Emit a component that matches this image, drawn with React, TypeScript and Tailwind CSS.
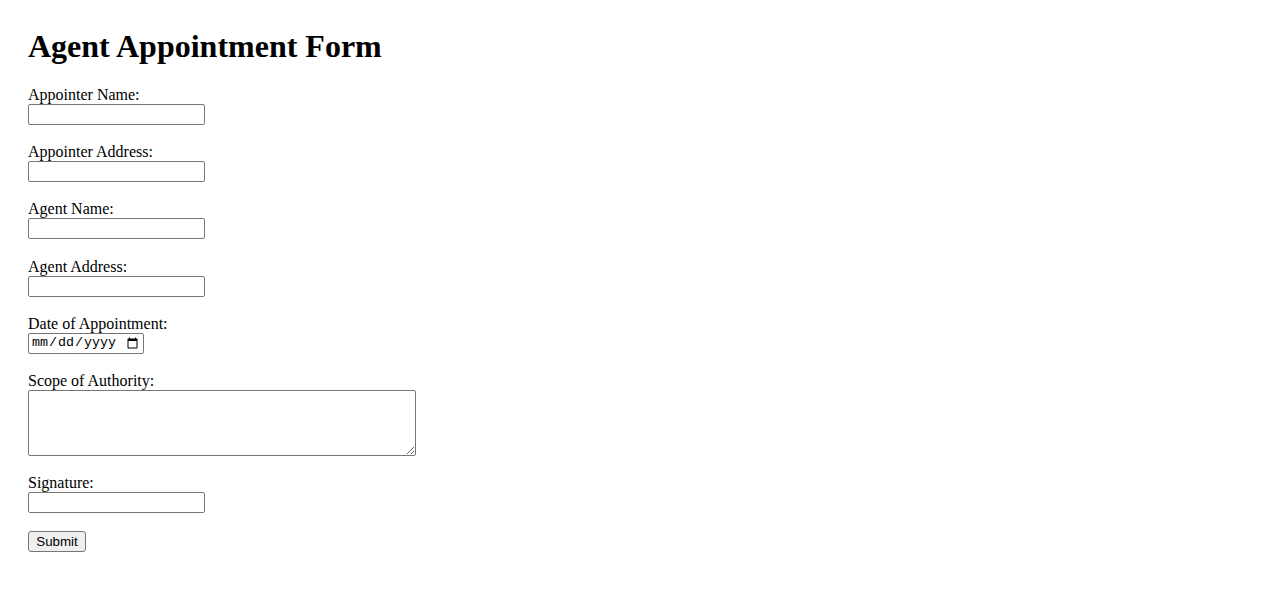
import React from "react";

const inputCls =
  "block w-[177px] h-[21px] border border-[#767676] rounded-[2px] bg-white px-[2px] text-[13.33px] font-['Liberation_Sans',Arial,sans-serif] outline-none";

function Field({ label, children }: { label: string; children: React.ReactNode }) {
  return (
    <div className="flex flex-col items-start mb-[18.2px]">
      <label className="block leading-[18px] text-[16px]">{label}</label>
      {children}
    </div>
  );
}

export default function App() {
  return (
    <div className="min-h-[601px] bg-white text-black font-['Liberation_Serif','Times_New_Roman',serif] pt-[28px] px-[28px]">
      <h1 className="text-[32px] font-bold leading-[37px] m-0 mb-[21px]">Agent Appointment Form</h1>
      <form onSubmit={(e) => e.preventDefault()}>
        <Field label="Appointer Name:">
          <input type="text" className={inputCls} />
        </Field>
        <Field label="Appointer Address:">
          <input type="text" className={inputCls} />
        </Field>
        <Field label="Agent Name:">
          <input type="text" className={inputCls} />
        </Field>
        <Field label="Agent Address:">
          <input type="text" className={inputCls} />
        </Field>
        <Field label="Date of Appointment:">
          <input
            type="date"
            className="block w-[116px] h-[21px] border border-[#767676] rounded-[2px] bg-white px-[2px] text-[13.33px] font-['Liberation_Mono','DejaVu_Sans_Mono',monospace] outline-none"
          />
        </Field>
        <Field label="Scope of Authority:">
          <textarea className="block w-[388px] h-[66px] border border-[#767676] rounded-[2px] bg-white p-[2px] text-[13.33px] font-['Liberation_Mono',monospace] outline-none resize" />
        </Field>
        <Field label="Signature:">
          <input type="text" className={inputCls} />
        </Field>
        <button
          type="submit"
          className="block w-[58px] h-[21px] border border-[#767676] rounded-[3px] bg-[#efefef] text-[13.33px] leading-[15px] font-['Liberation_Sans',Arial,sans-serif] text-black"
        >
          Submit
        </button>
      </form>
    </div>
  );
}
